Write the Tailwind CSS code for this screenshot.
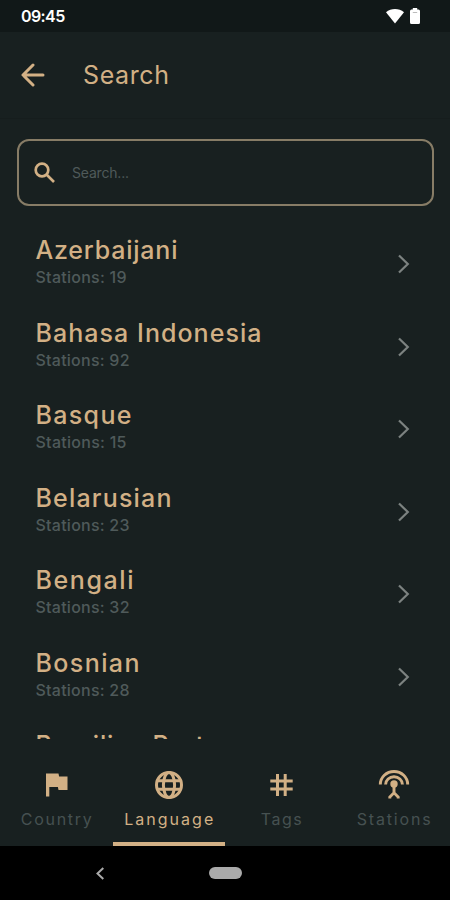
<!DOCTYPE html>
<html lang="en">
<head>
<meta charset="utf-8">
<meta name="viewport" content="width=device-width, initial-scale=1">
<title>Search</title>
<script src="https://cdn.jsdelivr.net/npm/@tailwindcss/browser@4"></script>
</head>
<body class="bg-[#182020]">
<div class="flex h-[900px] w-[450px] flex-col overflow-hidden bg-[#182020] font-['Inter',sans-serif] text-[#d2b085]">
  <div class="flex h-8 shrink-0 items-center bg-[#111818] pl-[21px] pr-[30px] text-white">
    <span class="text-[16px] leading-[34px] font-semibold tracking-[-0.6px]">09:45</span>
    <svg class="ml-auto" width="18" height="16" viewBox="0 0 18 16" fill="#fff"><path d="M0 4.200C5-.2 13-.2 18 4.200L9 15.500Z"/></svg>
    <svg class="ml-[6px]" width="10" height="16" viewBox="0 0 10 16"><path fill="#fff" d="M2.800 0h4.400v1.500H8.500Q10 1.500 10 3v11.500Q10 16 8.500 16h-7Q0 16 0 14.500V3Q0 1.500 1.500 1.500h1.300z"/><path stroke="#bbb" d="M2.800 4.500h4.400"/></svg>
  </div>
  <header class="flex h-[87px] shrink-0 items-center border-b border-[#161d1d] pl-[21px]">
    <svg width="24" height="24" viewBox="0 0 24 24" fill="none" stroke="#d2b085" stroke-width="3" stroke-linecap="round" stroke-linejoin="round"><path d="M22 12H2.200M12 2 2 12l10 10"/></svg>
    <h1 class="ml-[38px] text-[25px] leading-8"><span data-font="400 25px Inter" data-w="86">Search</span></h1>
  </header>
  <div class="ml-[17px] mr-4 mt-[20px] flex h-[67px] shrink-0 items-center rounded-[12px] border-2 border-[#877c66] pl-[15px]">
    <svg width="22" height="22" viewBox="0 0 22 22" fill="none" stroke="#d2b085" stroke-width="2.700"><circle cx="8" cy="8" r="6.300"/><path d="m12.500 12.500 7.500 7.500"/></svg>
    <span class="-mt-px ml-4 text-[14px] text-[#4f5a5a]"><span data-font="400 14px Inter" data-w="57">Search...</span></span>
  </div>
  <main id="list" class="mt-[17px] h-[516px] shrink-0 overflow-hidden"></main>
  <nav class="grid h-[107px] shrink-0 grid-cols-4 text-[16px] leading-5 text-[#465151]">
    <div class="flex flex-col items-center pt-[31px]">
      <svg width="30" height="30" viewBox="0 0 30 30" fill="#d2b085"><path d="M5 3.500h12.500l.6 3H26.500V20h-9l-.6-3H8.300v9.500H5z"/></svg>
      <span class="mt-[9px] whitespace-nowrap" data-font="400 16px Inter" data-w="71">Country</span>
    </div>
    <div class="flex flex-col items-center border-b-4 border-[#d2b085] pt-[31px] text-[#d2b085]">
      <svg width="30" height="30" viewBox="0 0 30 30" fill="none" stroke="#d2b085" stroke-width="3"><circle cx="15" cy="15" r="12.500"/><ellipse cx="15" cy="15" rx="5.600" ry="12.500"/><path d="M3 10.700h24M3 19.300h24"/></svg>
      <span class="mt-[9px] whitespace-nowrap" data-font="400 16px Inter" data-w="89">Language</span>
    </div>
    <div class="flex flex-col items-center pt-[31px]">
      <svg width="30" height="30" viewBox="0 0 30 30" fill="none" stroke="#d2b085" stroke-width="3"><path d="M11.500 4v22M19.200 4v22M4.300 11h22.400M4.300 19h22.400"/></svg>
      <span class="mt-[9px] whitespace-nowrap" data-font="400 16px Inter" data-w="41">Tags</span>
    </div>
    <div class="flex flex-col items-center pt-[31px]">
      <svg width="32" height="30" viewBox="0 0 32 30" fill="none" stroke="#d2b085" stroke-width="2.900"><path d="M2.300 14.500a13.700 13 0 0 1 27.400 0M7.600 14.500a8.400 7.800 0 0 1 16.800 0"/><circle cx="16" cy="14" r="3.700" fill="#d2b085" stroke="none"/><path d="M16 16v7M11.800 28.500V27l4.200-4.200 4.200 4.200v1.500"/></svg>
      <span class="mt-[9px] whitespace-nowrap" data-font="400 16px Inter" data-w="74">Stations</span>
    </div>
  </nav>
  <footer class="flex h-[54px] shrink-0 items-center bg-black pl-[96px]">
    <svg width="8" height="13" viewBox="0 0 8 13" fill="none" stroke="#aaa" stroke-width="2"><path d="M7.300 1 1.500 6.500l5.800 5.500"/></svg>
    <div class="ml-[105px] h-3 w-[33px] rounded-full bg-[#aaa]"></div>
  </footer>
</div>
<script>
const rows = [
  ["Azerbaijani", 19, 142], ["Bahasa Indonesia", 92, 226], ["Basque", 15, 96], ["Belarusian", 23, 136],
  ["Bengali", 32, 98], ["Bosnian", 28, 104], ["Brazilian Portuguese", 40, 262]
];
document.getElementById("list").innerHTML = rows.map(([name, count, width]) => `
  <div class="flex h-[82.5px] items-center justify-between pl-[35.5px] pr-[40px]">
    <div class="-mt-[3px]">
      <div class="text-[25px] leading-[30px] font-medium whitespace-nowrap"><span data-font="500 25px Inter" data-w="${width}">${name}</span></div>
      <div class="text-[16px] leading-[25px] font-medium text-[#4f5a5a]"><span data-font="500 16px Inter" data-w="${count === 19 || count === 15 ? 91 : 94}">Stations: ${count}</span></div>
    </div>
    <svg width="13" height="20" viewBox="0 0 13 20" fill="none" stroke="#7c8280" stroke-width="2.200"><path d="m2 1.500 8.800 8.500L2 18.500"/></svg>
  </div>`).join("");
// Track each label out to its nominal width.
const ctx = document.createElement("canvas").getContext("2d");
document.querySelectorAll("[data-w]").forEach(el => {
  ctx.font = el.dataset.font;
  const gap = (Number(el.dataset.w) - ctx.measureText(el.textContent).width) / (el.textContent.length - 1);
  el.style.letterSpacing = gap.toFixed(3) + "px";
  el.style.marginRight = (-gap).toFixed(3) + "px";
});
</script>
</body>
</html>
